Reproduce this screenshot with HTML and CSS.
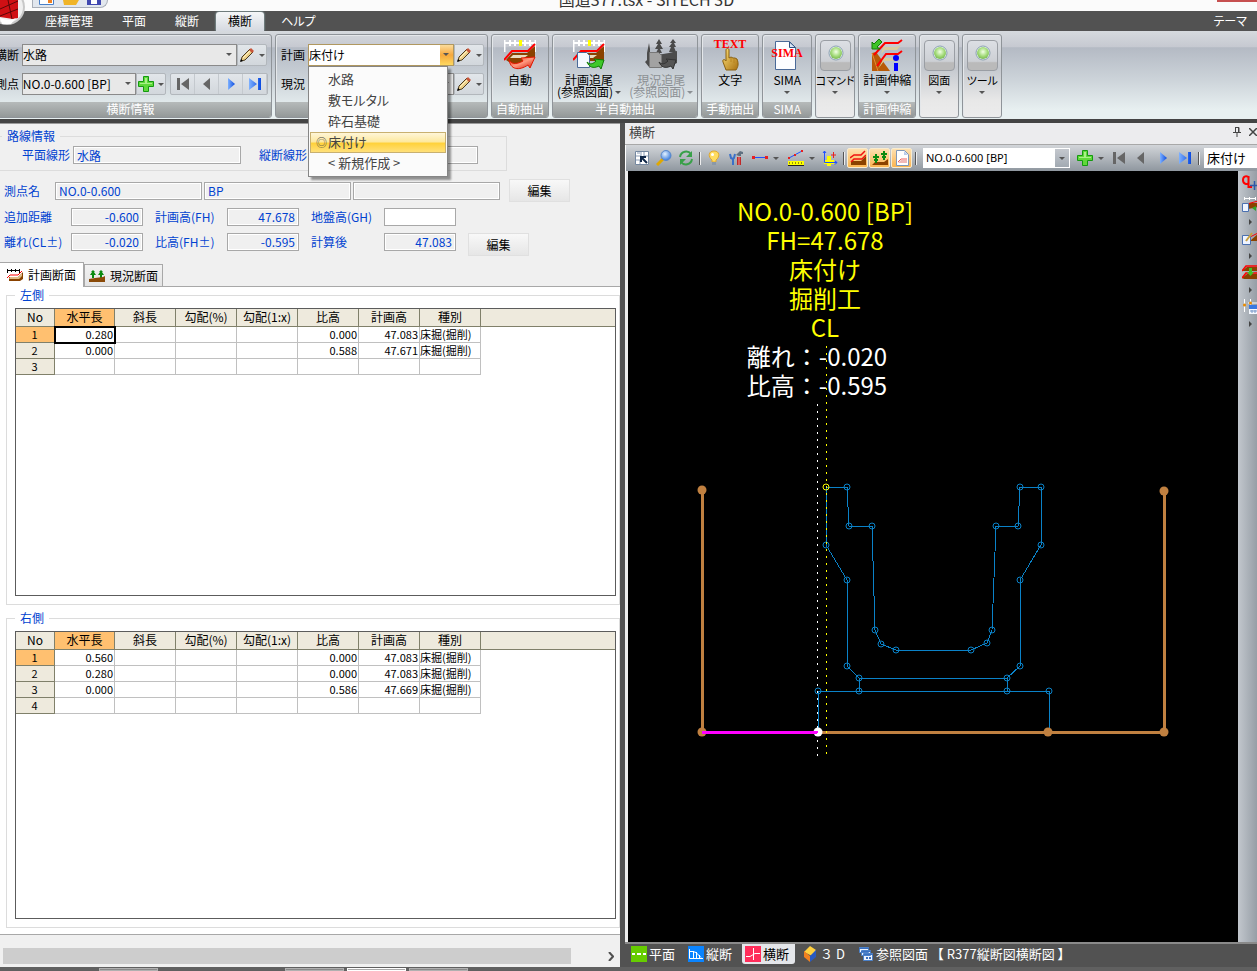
FILE: index.html
```
<!DOCTYPE html>
<html lang="ja">
<head>
    <meta charset="UTF-8">
    <meta name="viewport" content="width=device-width, initial-scale=1.0">
    <title>国道377.tsx - SiTECH 3D</title>
    <link rel="stylesheet" href="styles.css">
</head>
<body>
    <!-- Icons -->
    <svg class="sprite" width="0" height="0" aria-hidden="true">
        <defs>
            <linearGradient id="g-red" x1="0" y1="0" x2="1" y2="1"><stop offset="0" stop-color="#ff2a10"/><stop offset=".5" stop-color="#ff9a80"/><stop offset="1" stop-color="#d01000"/></linearGradient>
            <linearGradient id="g-blue" x1="0" y1="0" x2="1" y2="0"><stop offset="0" stop-color="#7fb2ff"/><stop offset="1" stop-color="#0a4ae0"/></linearGradient>
            <linearGradient id="g-gold" x1="0" y1="0" x2="1" y2="1"><stop offset="0" stop-color="#ffe27a"/><stop offset="1" stop-color="#a87010"/></linearGradient>
            <radialGradient id="g-ball" cx=".5" cy=".4" r=".6"><stop offset="0" stop-color="#f2ffe6"/><stop offset=".6" stop-color="#a5dc7c"/><stop offset="1" stop-color="#79b850"/></radialGradient>
            <radialGradient id="g-lens" cx=".4" cy=".35" r=".7"><stop offset="0" stop-color="#e4f2ff"/><stop offset="1" stop-color="#2f74d8"/></radialGradient>
        </defs>
        <symbol id="i-pencil" viewBox="0 0 16 16">
            <path d="M2 14l1-4 8-8 3 3-8 8z" fill="#ecd08a" stroke="#4a3a20"/>
            <path d="M10 3l3 3 2-2-3-3z" fill="#c8553a"/><path d="M4 11l7-7" stroke="#fff3c8"/><path d="M1 15l1-3 2 2z"/>
        </symbol>
        <symbol id="i-plus" viewBox="0 0 16 16">
            <path d="M5.500.5h5v5h5v5h-5v5h-5v-5h-5v-5h5z" fill="#5fd83a" stroke="#149a10"/><path d="M7 2h2v5h5v1H2V7h5z" fill="#a8f088"/>
        </symbol>
        <symbol id="i-first" viewBox="0 0 12 12"><path d="M0 0h3v12H0zM12 0v12L4 6z" fill="#666"/></symbol>
        <symbol id="i-prev" viewBox="0 0 12 12"><path d="M9 0v12L2 6z" fill="#666"/></symbol>
        <symbol id="i-next" viewBox="0 0 12 12"><path d="M3 0v12l7-6z" fill="url(#g-blue)"/></symbol>
        <symbol id="i-last" viewBox="0 0 12 12"><path d="M0 0v12l8-6zM9 0h3v12H9z" fill="url(#g-blue)"/></symbol>
        <symbol id="i-auto" viewBox="0 0 32 32">
            <path d="M.5 1v12M31.500 1v12M0 4h32M6 1v6M11 1v6M21 1v6M26 1v6" stroke="#fff" stroke-width="2" fill="none"/><path d="M15 1h3v6h-3z" fill="#ff0"/>
            <path d="M8 14h15l8-7v12l-10 6H8l-6-4z" fill="#8a4200"/><path d="M9 16h15l-4 3H6z" fill="#e8dcc0"/>
            <path d="M0 21l8-9h16l7-7" stroke="#f00" stroke-width="2" fill="none"/>
            <path d="M5 20c1 5 7 6 14 2l-2-3 14-1-5 11-2-3c-9 6-18 5-19-6z" fill="url(#g-red)" stroke="#e01800"/>
        </symbol>
        <symbol id="i-trace" viewBox="0 0 32 32">
            <path d="M.5 1v12M31.500 1v12M0 4h32M6 1v6M11 1v6M21 1v6M26 1v6" stroke="#fff" stroke-width="2" fill="none"/><path d="M15 1h3v6h-3z" fill="#ff0"/>
            <path d="M8 14h15l8-7v15H8z" fill="#8a4200"/><path d="M9 16h15l-4 3H6z" fill="#e8dcc0"/>
            <path d="M0 21l8-9h16l7-7" stroke="#f00" stroke-width="2" fill="none"/>
            <path d="M4.500 13.500h9l3 3v12h-12z" fill="#f4f8ff" stroke="#4a6a98"/>
            <path d="M14 23c3 3 6 2 9-1l-2-2 10 1-3 9-2-3c-6 3-10 1-12-4z" fill="#3fc82a" stroke="#127a08"/>
        </symbol>
        <symbol id="i-trees" viewBox="0 0 32 32">
            <path d="M14 0l3 5h-2l3 5h-3l2 4h-6l2-4h-3l3-5h-2zM28 0l3 4h-2l2 4h-2l2 5h-7l2-5h-2l3-4h-2zM4 4l1 6v4H2z" fill="#4a4a4a"/>
            <path d="M2 14h5l5 2 12-2 8-2v12l-9 4H4l-4-5 2-2z" fill="#4c4c4c"/><path d="M4.500 13.500h9l3 3v12h-12z" fill="#a2a2a2" stroke="#777"/>
            <path d="M14 23c3 3 6 2 9-1l-2-2 10 1-3 9-2-3c-6 3-10 1-12-4z" fill="#555" stroke="#333"/>
        </symbol>
        <symbol id="i-ball" viewBox="0 0 16 16"><circle cx="8" cy="8" r="7" fill="#eef4f8" stroke="#8aa0b0"/><circle cx="8" cy="8" r="6" fill="url(#g-ball)"/></symbol>
        <symbol id="i-stretch" viewBox="0 0 32 32">
            <path d="M1 32V14l4-1 14 19z" fill="#b85a08"/><path d="M1 14l6 18" stroke="#e88a30"/>
            <path d="M12 8h13l5-2-4 5H14l-4 4zM13 19h14l-3 3H13l-6 8z" fill="#d8cca0"/>
            <path d="M3 16L14 4h13l4-3M6 27l9-12h12l4-3" stroke="#f00" stroke-width="2" fill="none"/>
            <path d="M1 10V3l2 2 5-5 3 3-5 5 3 2z" fill="#3ec428" stroke="#127a08"/>
            <circle cx="25" cy="19" r="3" fill="#00f"/><path d="M23 24h4v8h-4z" fill="#00f"/>
        </symbol>
        <symbol id="i-section" viewBox="0 0 16 12">
            <path d="M0 1.500h13M.5 0v4M4.500 0v3M8.500 0v3M12.500 0v4" stroke="#000" fill="none"/>
            <path d="M2 8h9l5-5v7l-3 2H2z" fill="#8a4200"/><path d="M3 8h8l4-4v3l-3 3H2z" fill="#e0bc88"/><path d="M0 9l3-3h8l4-4" stroke="#f00" fill="none"/>
        </symbol>
        <symbol id="i-trees-small" viewBox="0 0 16 12">
            <path d="M4 0l2 2H5l2 3H5v3H3V5H1l2-3H2zM12 0l2 2h-1l2 3h-2v3h-2V5H9l2-3h-1z" fill="#0a8a10"/><path d="M0 9l6-1 8-1 2-1v6H0z" fill="#8a4a08"/>
        </symbol>
        <symbol id="i-window" viewBox="0 0 16 16">
            <path d="M1.500 1.500h13v13h-13z" fill="#fff" stroke="#7488a0"/><path d="M2 6h5V2M3 3h3M10 2v4h4M2 10h4v4" stroke="#8a9cb4" fill="none"/><path d="M7 7l6 6M7 12V7h5" stroke="#102848" stroke-width="2" fill="none"/>
        </symbol>
        <symbol id="i-loupe" viewBox="0 0 16 16"><path d="M1 15l6-6" stroke="#e0a800" stroke-width="3"/><circle cx="10" cy="5.500" r="5" fill="url(#g-lens)" stroke="#5a88c8"/></symbol>
        <symbol id="i-refresh" viewBox="0 0 16 16"><path d="M2 7c1-6 8-7 11-3M14 9c-1 6-8 7-11 3" stroke="#38a048" stroke-width="2" fill="none"/><path d="M14 1v6H8zM2 15V9h6z" fill="#38a048"/></symbol>
        <symbol id="i-bulb" viewBox="0 0 16 16"><path d="M8 1c6 0 6 6 2 9v2H6v-2C2 7 2 1 8 1z" fill="#ffdc60" stroke="#e0a830"/><circle cx="6.500" cy="4.500" r="1.500" fill="#fff"/><path d="M6 12h4v3H6z" fill="#8a98a8"/></symbol>
        <symbol id="i-tools" viewBox="0 0 16 16"><path d="M2 4l1 4 2 1v6M7 4L6 8 5 9" stroke="#3a70c8" stroke-width="2" fill="none"/><path d="M8 5l4-4 3 1v2h-2v2h-2z" fill="#607080"/><path d="M9 7h4v8H9z" fill="#c02828"/><path d="M11 7v8" stroke="#f09090"/></symbol>
        <symbol id="i-line" viewBox="0 0 16 16"><path d="M1 7.500h14" stroke="#2050ff"/><path d="M0 6h3v3H0zM13 6h3v3h-3z" fill="#e82020"/></symbol>
        <symbol id="i-measure" viewBox="0 0 16 16"><path d="M1 8l13-7" stroke="#2050ff"/><path d="M0 7h2v2H0zM6 4h2v2H6zM13 0h2v2h-2z" fill="#e82020"/><path d="M0 11h16v4H0z" fill="#ff0"/><path d="M0 15.500h16M1 13h1M4 13h1M7 13h1M10 13h1M13 13h1" stroke="#222"/></symbol>
        <symbol id="i-axes" viewBox="0 0 16 16"><path d="M5 6h4v4h3v4H9v2H5v-2H2v-4h3z" fill="#ff0"/><path d="M2.500 1v11.500H15M1 3l1.500-2L4 3M13 11l2 1.500-2 2" stroke="#2050ff" fill="none"/><path d="M11.500 2v6M9 5h5" stroke="#e82020"/></symbol>
        <symbol id="i-t-plan" viewBox="0 0 16 16"><path d="M1 15v-4h10l5-5v9z" fill="#8a4200"/><path d="M0 8l4-3h7l4-4M1 12l3-3h8l4-4" stroke="#f01010" stroke-width="1.500" fill="none"/></symbol>
        <symbol id="i-t-trees" viewBox="0 0 16 16"><path d="M0 15l3-3h9l4-3v6z" fill="#8a4200"/><path d="M4 4v9M1 7h6M2 10h4M12 1v9M9 4h6M10 7h4" stroke="#0a8a10" stroke-width="2"/></symbol>
        <symbol id="i-t-page" viewBox="0 0 16 16"><path d="M2.500.5h8l4 4v11h-12z" fill="#fff" stroke="#8098b8"/><path d="M10 1v4h4z" fill="#b8ccec"/><path d="M4 13l3-3h6v3z" fill="#f0b8b8"/><path d="M4 12l3-3h6" stroke="#f06060" fill="none"/></symbol>
        <symbol id="i-s-doc" viewBox="0 0 16 16"><path d="M2 1.500h12M2.500 0v3M7.500 0v3M13.500 0v3" stroke="#fff"/><path d="M6 12V6h10v4z" fill="#8a4200"/><path d="M5 7l11-3" stroke="#f00"/><path d="M.5 6.500h6v8h-6z" fill="#eef4ff" stroke="#4a70b0"/><path d="M6 8l8 6v-5l-4 2z" fill="#2fa828"/></symbol>
        <symbol id="i-s-edit" viewBox="0 0 16 16"><path d="M9 9l7-6v7H9z" fill="#8a4200"/><path d="M6 7l10-5" stroke="#f00"/><path d="M.5 4.500h8v9h-8z" fill="#eef4ff" stroke="#4a70b0"/><path d="M4 10l6-8" stroke="#c8a040" stroke-width="2"/></symbol>
        <symbol id="i-s-layer" viewBox="0 0 16 16"><path d="M0 6l5-4h11v4H4zM0 13l5-4h11v5H2z" fill="#8a4200"/><path d="M0 6l4-5h12M0 13l4-5h12" stroke="#f00" stroke-width="1.500" fill="none"/><path d="M7 3h3v4h2l-3.500 4L5 7h2z" fill="#3ec428"/></symbol>
        <symbol id="i-s-table" viewBox="0 0 16 16"><path d="M2.500 0v13M8.500 0v6M6 4h10" stroke="#fff"/><circle cx="2.500" cy="6" r="1.500" fill="#e88a00"/><circle cx="8.500" cy="4" r="1.500" fill="#e88a00"/><path d="M7 6h9v9H7z" fill="#f4f8ff"/><path d="M7 6h9v4H7z" fill="#3a78e0"/><path d="M8 12h8M10 11v3M13 11v3" stroke="#7898c8"/></symbol>
        <symbol id="i-v-plan" viewBox="0 0 16 16"><path d="M0 0h16v16H0z" fill="#6c0"/><path d="M1 8h3M6 8h4M12 8h3" stroke="#fff" stroke-width="2"/></symbol>
        <symbol id="i-v-long" viewBox="0 0 16 16"><path d="M0 0h16v16H0z" fill="#0a84ff"/><path d="M1.500 3v9.500H15M1 5.500h4l3 1 5 5M5.500 5v8M8.500 6v7M11.500 9v4" stroke="#fff" fill="none"/></symbol>
        <symbol id="i-v-cross" viewBox="0 0 16 16"><path d="M0 0h16v16H0z" fill="#ff2d5a"/><path d="M8.500 2v12M1 10.500h4l5-3h5" stroke="#fff" fill="none"/></symbol>
        <symbol id="i-v-3d" viewBox="0 0 16 16"><path d="M8 0l6 4-4 6-8-4z" fill="#ffd040"/><path d="M2 5l6 5v6l-6-5z" fill="#f08020"/><path d="M8 10l6-6v7l-6 5z" fill="#2a5ac0"/></symbol>
        <symbol id="i-v-ref" viewBox="0 0 16 16"><path d="M1.500 1.500h9v5h-9zM3.500 4.500h9v5h-9zM5.500 7.500h9v7h-9z" fill="#eaf2ff" stroke="#4a80c8"/><path d="M1 2.500h10M3 5.500h10M6 8.500h9" stroke="#3a70c0"/><path d="M8 12h2M11 12h2" stroke="#3a70c0" stroke-width="2"/></symbol>
        <symbol id="i-pin" viewBox="0 0 8 10"><path d="M2 .5h4v5M2.500 0v5M5.500 0v5M0 5.500h8M4 6v4" stroke="#444" fill="none"/></symbol>
        <symbol id="i-close" viewBox="0 0 8 8"><path d="M0 0l8 8M8 0L0 8" stroke="#444" stroke-width="1.500"/></symbol>
    </svg>

    <div class="app">
        <svg class="app-logo" viewBox="0 0 26 26" aria-hidden="true">
            <circle cx="7" cy="7" r="18" fill="#c8c8c8"/><circle cx="7" cy="7" r="16" fill="#f0f0f0"/>
            <path d="M0 0h18v18L13 19 0 17z" fill="#d01014"/><path d="M0 9L18 1M0 16l18-7M8 0l4 19" stroke="#5a0808"/><path d="M0 18q10 4 16 0l-5 6H2z" fill="#fff"/>
        </svg>

        <header class="titlebar">
            <div class="quick">
                <svg width="16" height="5" viewBox="0 0 16 5"><path d="M.5 0v4.500h14V0" fill="#fff" stroke="#4a80c8"/><path d="M9 0h4v3H9z" fill="#f08020"/></svg>
                <svg width="16" height="5" viewBox="0 0 16 5"><path d="M0 0h16l-3 5H1z" fill="#f0b428"/></svg>
                <svg width="14" height="5" viewBox="0 0 14 5"><path d="M0 0h14v5H0z" fill="#4048b0"/><path d="M4 0h6v4H4z" fill="#fff"/></svg>
            </div>
            <div class="title">国道377.tsx - SiTECH 3D</div>
            <div class="window-buttons"><span class="close"></span></div>
        </header>

        <nav class="menubar">
            <a href="#">座標管理</a>
            <a href="#">平面</a>
            <a href="#">縦断</a>
            <a href="#" class="active">横断</a>
            <a href="#">ヘルプ</a>
            <a href="#" class="theme">テーマ</a>
        </nav>

        <div class="ribbon">
            <section class="group group-info">
                <div class="rows">
                    <div class="row">
                        <label for="line">横断</label>
                        <span class="combo combo-long"><select id="line"><option>水路</option></select></span>
                        <button class="split" aria-label="編集"><svg width="16" height="16"><use href="#i-pencil"/></svg><i class="caret"></i></button>
                    </div>
                    <div class="row">
                        <label for="station">測点</label>
                        <span class="combo combo-short"><select id="station"><option>NO.0-0.600 [BP]</option></select></span>
                        <button class="split" aria-label="追加"><svg width="16" height="16"><use href="#i-plus"/></svg><i class="caret"></i></button>
                        <div class="pager">
                            <button aria-label="最初"><svg width="12" height="12"><use href="#i-first"/></svg></button>
                            <button aria-label="前"><svg width="12" height="12"><use href="#i-prev"/></svg></button>
                            <button aria-label="次"><svg width="12" height="12"><use href="#i-next"/></svg></button>
                            <button aria-label="最後"><svg width="12" height="12"><use href="#i-last"/></svg></button>
                        </div>
                    </div>
                </div>
                <h2>横断情報</h2>
            </section>

            <section class="group group-plan">
                <div class="rows">
                    <div class="row">
                        <label for="plan">計画</label>
                        <span class="combo combo-mid open">
                            <select id="plan"><option>床付け</option></select>
                            <ul class="dropdown">
                                <li>水路</li>
                                <li>敷モルタル</li>
                                <li>砕石基礎</li>
                                <li class="selected">床付け</li>
                                <li>&lt; 新規作成 &gt;</li>
                            </ul>
                        </span>
                        <button class="split" aria-label="計画を編集"><svg width="16" height="16"><use href="#i-pencil"/></svg><i class="caret"></i></button>
                    </div>
                    <div class="row">
                        <label for="present">現況</label>
                        <span class="combo combo-mid"><select id="present"><option></option></select></span>
                        <button class="split" aria-label="現況を編集"><svg width="16" height="16"><use href="#i-pencil"/></svg><i class="caret"></i></button>
                    </div>
                </div>
                <h2></h2>
            </section>

            <section class="group">
                <div class="tools"><button class="big"><svg width="32" height="32"><use href="#i-auto"/></svg>自動</button></div>
                <h2>自動抽出</h2>
            </section>

            <section class="group group-semi">
                <div class="tools">
                    <button class="big"><svg width="32" height="32"><use href="#i-trace"/></svg>計画追尾<span>(参照図面)<i class="caret"></i></span></button>
                    <button class="big" disabled><svg width="32" height="32"><use href="#i-trees"/></svg>現況追尾<span>(参照図面)<i class="caret"></i></span></button>
                </div>
                <h2>半自動抽出</h2>
            </section>

            <section class="group">
                <div class="tools">
                    <button class="big">
                        <svg width="34" height="32" viewBox="0 0 34 32">
                            <text x="17" y="9" text-anchor="middle" class="icon-serif">TEXT</text>
                            <path d="M13 11c0-2 3-2 3 0v8l2-1 2 1 2 0 2 1c2 5 1 8-1 11H13l-3-8c-1-3 2-3 3-1z" fill="url(#g-gold)" stroke="#8a6010"/>
                            <path d="M18 19v4M21 20v4" stroke="#b88420"/>
                        </svg>
                        文字
                    </button>
                </div>
                <h2>手動抽出</h2>
            </section>

            <section class="group group-sima">
                <div class="tools">
                    <button class="big">
                        <svg width="34" height="32" viewBox="0 0 34 32">
                            <path d="M5.500 2.500h14l6 6v22h-20z" fill="#fcfdff" stroke="#4a6a98"/><path d="M19.500 3v5.500h6z" fill="#dde8f8" stroke="#2f5080"/>
                            <text x="17" y="18" text-anchor="middle" class="icon-serif">SIMA</text>
                        </svg>
                        SIMA<span><i class="caret"></i></span>
                    </button>
                </div>
                <h2>SIMA</h2>
            </section>

            <section class="group folded">
                <button class="big"><span class="ball"><svg width="16" height="16"><use href="#i-ball"/></svg></span>コマンド<span><i class="caret"></i></span></button>
            </section>

            <section class="group">
                <div class="tools"><button class="big"><svg width="32" height="32"><use href="#i-stretch"/></svg>計画伸縮<span><i class="caret"></i></span></button></div>
                <h2>計画伸縮</h2>
            </section>

            <section class="group folded">
                <button class="big"><span class="ball"><svg width="16" height="16"><use href="#i-ball"/></svg></span>図面<span><i class="caret"></i></span></button>
            </section>

            <section class="group folded">
                <button class="big"><span class="ball"><svg width="16" height="16"><use href="#i-ball"/></svg></span>ツール<span><i class="caret"></i></span></button>
            </section>
        </div>

        <main class="work">
            <section class="left">
                <fieldset class="route">
                    <legend>路線情報</legend>
                    <div class="route-row">
                        <label for="h-line">平面線形</label><input id="h-line" value="水路" readonly>
                        <label for="v-line">縦断線形</label><input id="v-line" value="" readonly>
                    </div>
                </fieldset>

                <div class="station-row">
                    <label for="st-name">測点名</label>
                    <input id="st-name" value="NO.0-0.600" readonly>
                    <input aria-label="測点名 2" value="BP" readonly>
                    <input aria-label="測点名 3" value="" readonly>
                    <button class="edit">編集</button>
                </div>

                <div class="values">
                    <label for="v1">追加距離</label><input id="v1" value="-0.600" readonly>
                    <label for="v2">計画高(FH)</label><input id="v2" value="47.678" readonly>
                    <label for="v3">地盤高(GH)</label><input id="v3" value="">
                    <span></span>
                    <label for="v4">離れ(CL±)</label><input id="v4" value="-0.020" readonly>
                    <label for="v5">比高(FH±)</label><input id="v5" value="-0.595" readonly>
                    <label for="v6">計算後</label><input id="v6" value="47.083" readonly>
                    <button class="edit">編集</button>
                </div>

                <div class="tabs">
                    <button class="active"><svg width="16" height="12"><use href="#i-section"/></svg>計画断面</button>
                    <button><svg width="16" height="12"><use href="#i-trees-small"/></svg>現況断面</button>
                </div>

                <div class="tab-page">
                    <fieldset class="side">
                        <legend>左側</legend>
                        <div class="sheet">
                            <table>
                                <colgroup><col class="c-no"><col class="c-first"><col class="c" span="6"><col></colgroup>
                                <thead>
                                    <tr><th>No</th><th class="on">水平長</th><th>斜長</th><th>勾配(%)</th><th>勾配(1:x)</th><th>比高</th><th>計画高</th><th>種別</th><th></th></tr>
                                </thead>
                                <tbody>
                                    <tr><th class="on">1</th><td class="cursor">0.280</td><td></td><td></td><td></td><td>0.000</td><td>47.083</td><td class="kind">床掘(掘削)</td></tr>
                                    <tr><th>2</th><td>0.000</td><td></td><td></td><td></td><td>0.588</td><td>47.671</td><td class="kind">床掘(掘削)</td></tr>
                                    <tr><th>3</th><td></td><td></td><td></td><td></td><td></td><td></td><td></td></tr>
                                </tbody>
                            </table>
                        </div>
                    </fieldset>

                    <fieldset class="side">
                        <legend>右側</legend>
                        <div class="sheet">
                            <table>
                                <colgroup><col class="c-no"><col class="c-first"><col class="c" span="6"><col></colgroup>
                                <thead>
                                    <tr><th>No</th><th class="on">水平長</th><th>斜長</th><th>勾配(%)</th><th>勾配(1:x)</th><th>比高</th><th>計画高</th><th>種別</th><th></th></tr>
                                </thead>
                                <tbody>
                                    <tr><th class="on">1</th><td>0.560</td><td></td><td></td><td></td><td>0.000</td><td>47.083</td><td class="kind">床掘(掘削)</td></tr>
                                    <tr><th>2</th><td>0.280</td><td></td><td></td><td></td><td>0.000</td><td>47.083</td><td class="kind">床掘(掘削)</td></tr>
                                    <tr><th>3</th><td>0.000</td><td></td><td></td><td></td><td>0.586</td><td>47.669</td><td class="kind">床掘(掘削)</td></tr>
                                    <tr><th>4</th><td></td><td></td><td></td><td></td><td></td><td></td><td></td></tr>
                                </tbody>
                            </table>
                        </div>
                    </fieldset>
                </div>

                <div class="scrollbar">
                    <div class="thumb"></div>
                    <svg width="6" height="9" viewBox="0 0 6 9"><path d="M1 0l4 4.500L1 9" stroke="#505050" stroke-width="2" fill="none"/></svg>
                </div>
            </section>

            <section class="right">
                <div class="pane-title">
                    <span>横断</span>
                    <svg width="8" height="10"><use href="#i-pin"/></svg>
                    <svg width="8" height="8"><use href="#i-close"/></svg>
                </div>

                <div class="toolbar">
                    <button aria-label="範囲"><svg width="16" height="16"><use href="#i-window"/></svg></button>
                    <button aria-label="拡大"><svg width="16" height="16"><use href="#i-loupe"/></svg></button>
                    <button aria-label="再描画"><svg width="16" height="16"><use href="#i-refresh"/></svg></button>
                    <i class="sep"></i>
                    <button aria-label="表示"><svg width="16" height="16"><use href="#i-bulb"/></svg></button>
                    <button aria-label="設定"><svg width="16" height="16"><use href="#i-tools"/></svg></button>
                    <button class="wide" aria-label="線"><svg width="16" height="16"><use href="#i-line"/></svg><i class="caret"></i></button>
                    <button class="wide" aria-label="計測"><svg width="16" height="16"><use href="#i-measure"/></svg><i class="caret"></i></button>
                    <button aria-label="座標軸"><svg width="16" height="16"><use href="#i-axes"/></svg></button>
                    <i class="sep"></i>
                    <button class="toggle" aria-label="計画"><svg width="16" height="16"><use href="#i-t-plan"/></svg></button>
                    <button class="toggle" aria-label="現況"><svg width="16" height="16"><use href="#i-t-trees"/></svg></button>
                    <button class="toggle" aria-label="図面"><svg width="16" height="16"><use href="#i-t-page"/></svg></button>
                    <i class="sep"></i>
                    <span class="combo flat"><select aria-label="測点"><option>NO.0-0.600 [BP]</option></select></span>
                    <button class="wide" aria-label="追加"><svg width="16" height="16"><use href="#i-plus"/></svg><i class="caret"></i></button>
                    <button aria-label="最初"><svg width="12" height="12"><use href="#i-first"/></svg></button>
                    <button aria-label="前"><svg width="12" height="12"><use href="#i-prev"/></svg></button>
                    <button aria-label="次"><svg width="12" height="12"><use href="#i-next"/></svg></button>
                    <button aria-label="最後"><svg width="12" height="12"><use href="#i-last"/></svg></button>
                    <i class="sep"></i>
                    <span class="combo flat surface"><select aria-label="計画"><option>床付け</option></select></span>
                </div>

                <div class="view">
                    <svg class="drawing" viewBox="0 0 610 771" role="img" aria-label="横断図">
                        <defs>
                            <marker id="node" markerWidth="9" markerHeight="9" refX="4.500" refY="4.500" markerUnits="userSpaceOnUse">
                                <circle cx="4.500" cy="4.500" r="3" fill="none" stroke="#0a82c8"/>
                            </marker>
                            <marker id="dot" markerWidth="10" markerHeight="10" refX="5" refY="5" markerUnits="userSpaceOnUse">
                                <circle cx="5" cy="5" r="4.500" fill="#c08040"/>
                            </marker>
                        </defs>
                        <g class="caption">
                            <text x="197" y="50">NO.0-0.600 [BP]</text>
                            <text x="197" y="79">FH=47.678</text>
                            <text x="197" y="108">床付け</text>
                            <text x="197" y="137">掘削工</text>
                            <text x="197" y="166">CL</text>
                            <text x="189" y="195" class="white">離れ：-0.020</text>
                            <text x="189" y="224" class="white">比高：-0.595</text>
                        </g>
                        <!-- U字溝 -->
                        <polyline class="pipe" points="198,316 219,316 221,355 244,355 247,459 253,473 268,479 343,479 359,472 364,459 368,355 390,355 392,316 413,316 413,374 392,409 392,495 379,507 231,507 219,495 219,409 198,374 198,316"/>
                        <!-- 敷モルタル -->
                        <polyline class="pipe" points="231,507 231,520 379,520 379,507"/>
                        <!-- 砕石基礎 -->
                        <polyline class="pipe" points="190,561 190,520 421,520 421,561"/>
                        <!-- 床付け -->
                        <polyline class="cut" points="74,319 74,561 420,561 536,561 536,320"/>
                        <circle cx="190" cy="561" r="4.500" fill="#fff"/>
                        <path d="M74 561h116" stroke="#f0f" stroke-width="3" shape-rendering="crispEdges"/>
                        <path d="M189.500 233v352" stroke="#fff" class="axis"/>
                        <path d="M198.500 175v408" stroke="#ff0" class="axis"/>
                        <circle cx="198" cy="316" r="3" fill="none" stroke="#ff0"/>
                    </svg>
                    <div class="side-tools">
                        <button aria-label="CL移動">
                            <svg width="16" height="16" viewBox="0 0 16 16"><path d="M7 3C5 0 1 1 1 5s4 5 6 3M6.500 1v11H10" stroke="#f00" stroke-width="2" fill="none"/><path d="M12.500 6v9M8 10.500h8" stroke="#2f58a8" stroke-width="1.500"/></svg>
                        </button>
                        <button aria-label="抽出"><svg width="16" height="16"><use href="#i-s-doc"/></svg><i class="caret side-caret"></i></button>
                        <button aria-label="編集"><svg width="16" height="16"><use href="#i-s-edit"/></svg><i class="caret side-caret"></i></button>
                        <button aria-label="層"><svg width="16" height="16"><use href="#i-s-layer"/></svg><i class="caret side-caret"></i></button>
                        <button aria-label="表"><svg width="16" height="16"><use href="#i-s-table"/></svg><i class="caret side-caret"></i></button>
                    </div>
                </div>

                <nav class="view-tabs">
                    <a href="#"><svg width="16" height="16"><use href="#i-v-plan"/></svg>平面</a>
                    <a href="#"><svg width="16" height="16"><use href="#i-v-long"/></svg>縦断</a>
                    <a href="#" class="active"><svg width="16" height="16"><use href="#i-v-cross"/></svg>横断</a>
                    <a href="#"><svg width="16" height="16"><use href="#i-v-3d"/></svg>３ D</a>
                    <a href="#"><svg width="16" height="16"><use href="#i-v-ref"/></svg>参照図面 【 R377縦断図横断図 】</a>
                </nav>
            </section>
        </main>

        <footer class="taskbar">
            <span class="first"></span><span></span><span class="current"></span><span></span>
        </footer>
    </div>
</body>
</html>
```
FILE: styles.css
```
* {
    box-sizing: border-box;
}
body {
    margin: 0;
    font-family: "Noto Sans CJK JP", sans-serif;
    font-size: 12px;
    line-height: 14px;
    font-feature-settings: "palt";
    color: #000;
    background: #f0f0f0;
}
a {
    color: inherit;
    text-decoration: none;
}
button, input, select {
    font: inherit;
    font-feature-settings: inherit;
    margin: 0;
    padding: 0;
    border: 0;
    border-radius: 0;
    background: none;
    color: inherit;
}
svg {
    display: block;
    flex: none;
}
.sprite {
    position: absolute;
}
.app {
    position: relative;
    display: flex;
    flex-direction: column;
    height: 100vh;
    overflow: hidden;
}
.app-logo {
    position: absolute;
    top: 0;
    left: 0;
    width: 26px;
    height: 26px;
}
.icon-serif {
    font-family: "Liberation Serif", serif;
    font-size: 12px;
    font-weight: bold;
    fill: #f00;
}
.caret {
    flex: none;
    display: inline-block;
    border: 3px solid transparent;
    border-top-color: #555;
    border-bottom: 0;
}

/* Title bar */
.titlebar {
    display: flex;
    align-items: flex-end;
    height: 11px;
    overflow: hidden;
    background: #fbfbfb;
}
.quick {
    flex: 0 0 76px;
    display: flex;
    gap: 8px;
    height: 8px;
    margin: 0 0 3px 32px;
    padding-left: 6px;
    background: #e2e7ee;
    border: 1px solid #a8aeb8;
    border-top: 0;
    border-radius: 0 0 8px 0;
}
.title {
    flex: 1;
    padding-bottom: 2px;
    font-size: 16px;
    line-height: 20px;
    text-align: center;
    color: #333;
}
.window-buttons {
    display: flex;
    justify-content: flex-end;
    width: 72px;
    height: 11px;
}
.close {
    width: 40px;
    height: 2px;
    background: #c75050;
}

/* Menu */
.menubar {
    display: flex;
    gap: 5px;
    height: 20px;
    padding-left: 33px;
    color: #fff;
    background: #525252;
}
.menubar a {
    padding: 3px 12px;
}
.menubar .active {
    margin-top: 1px;
    padding-top: 2px;
    color: #000;
    background: linear-gradient(#f4f6f8, #d5d9e0);
    border-radius: 3px 3px 0 0;
    box-shadow: 0 0 2px #bdf0f4;
}
.menubar .theme {
    margin-left: auto;
    padding-right: 10px;
}

/* Ribbon */
.ribbon {
    display: flex;
    gap: 3px;
    height: 88px;
    padding: 3px 0 1px;
    background: linear-gradient(#d6dade, #c6c9d1 18%, #b4bac4 19%, #ccd3d9 55%, #e8f0f1 90%);
}
.group {
    flex: none;
    display: flex;
    flex-direction: column;
    border: 1px solid #8f9499;
    border-radius: 3px;
    box-shadow: inset 1px 1px 0 #e4e7ea;
    overflow: hidden;
}
.group h2 {
    height: 15px;
    margin: auto 0 0;
    padding: 0 4px;
    font-size: 12px;
    font-weight: normal;
    line-height: 14px;
    text-align: center;
    color: #fff;
    background: linear-gradient(#b6baba, #949999);
}
.group-info {
    margin-left: -15px;
    padding-left: 4px;
    width: 287px;
}
.group-plan {
    width: 213px;
    overflow: visible;
}
.rows {
    display: flex;
    flex-direction: column;
    gap: 7px;
    padding: 9px 3px 0 5px;
}
.row {
    display: flex;
    align-items: center;
    height: 22px;
}
.row label {
    width: 27px;
}
.combo {
    position: relative;
    display: flex;
    align-items: center;
    height: 22px;
    background: #e8e8e8;
    border: 1px solid #8a8a8a;
}
.combo select {
    width: 100%;
    height: 100%;
    appearance: none;
}
.combo::after {
    content: "";
    position: absolute;
    right: 4px;
    top: 8px;
    border: 3px solid transparent;
    border-top-color: #555;
    border-bottom: 0;
    pointer-events: none;
}
.combo-long {
    width: 215px;
}
.combo-short {
    width: 115px;
}
.combo-mid {
    width: 146px;
}
.combo.open {
    background: linear-gradient(#fbdc9c, #f6a83c 50%, #fdd860);
    border-color: #b09860;
}
.combo.open select {
    width: 131px;
    background: #fff;
}
.split {
    display: flex;
    align-items: center;
    justify-content: center;
    gap: 4px;
    width: 30px;
    height: 22px;
    background: linear-gradient(#e2e6ea, #d2d7dc);
    border: 1px solid #b2b7bc;
    border-radius: 0 2px 2px 0;
}
.pager {
    display: flex;
    height: 22px;
    margin-left: 4px;
    background: linear-gradient(#e2e6ea, #d2d7dc);
    border: 1px solid #b2b7bc;
    border-radius: 2px;
}
.pager button {
    display: flex;
    align-items: center;
    justify-content: center;
    width: 24px;
    border-right: 1px solid #c4c9ce;
}
.dropdown {
    position: absolute;
    z-index: 10;
    top: 21px;
    left: -1px;
    width: 140px;
    margin: 0;
    padding: 2px 1px;
    list-style: none;
    color: #444;
    background: #fbfbfb;
    border: 1px solid #868686;
    box-shadow: 3px 3px 2px rgba(0, 0, 0, .4);
}
.dropdown li {
    height: 21px;
    padding-left: 17px;
    border: 1px solid transparent;
    font-size: 13px;
    line-height: 17px;
}
.dropdown .selected {
    background: linear-gradient(#fff6d8, #fde9a0 45%, #ffd23c 55%, #ffe07a);
    border-color: #c8b070;
}
.dropdown .selected::before {
    content: "◎";
    display: inline-block;
    width: 12px;
    margin-left: -12px;
    font-size: 11px;
}
.tools {
    display: flex;
    justify-content: center;
}
.big {
    display: flex;
    flex-direction: column;
    align-items: center;
    padding: 4px 2px 0;
    line-height: 12px;
    white-space: nowrap;
}
.big > svg {
    margin-bottom: 3px;
}
.big > span {
    display: flex;
    align-items: center;
    gap: 2px;
    height: 12px;
}
.big:disabled {
    color: #8c9094;
}
.big:disabled .caret {
    border-top-color: #8c9094;
}
.group-semi .big {
    padding: 4px 4px 0;
}
.group-sima {
    width: 50px;
}
.folded {
    width: 40px;
    background: linear-gradient(#dcdfe3, #c4c8ce 40%, #e8e8e8 80%, #ececec);
}
.folded .big {
    padding: 5px 0 0;
    font-size: 11px;
}
.big .ball {
    width: 31px;
    height: 31px;
    margin-bottom: 3px;
    padding: 4px 7px;
    align-items: flex-start;
    background: linear-gradient(#dcdfe4, #cdd0d5 70%, #bababa 75%);
    border: 1px solid #9a9ea4;
    border-radius: 4px;
}

/* Work area */
.work {
    flex: 1;
    min-height: 0;
    display: grid;
    grid-template-columns: minmax(0, 620fr) 5px minmax(0, 632fr);
    border-top: 4px solid #444;
    background: #525252;
}
.left {
    display: flex;
    flex-direction: column;
    min-height: 0;
    color: #0042d0;
    background: #f0f0f0;
    border-top: 1px solid #999;
}
fieldset {
    min-width: 0;
    margin: 0;
    padding: 0;
    border: 1px solid #dcdcdc;
}
legend {
    padding: 0 5px;
}
.left input {
    width: 72px;
    height: 18px;
    padding: 0 3px;
    color: #0042d0;
    background: #fff;
    border: 1px solid #a8a8a8;
}
.left input:read-only {
    background: #f0f0f0;
    box-shadow: inset 0 0 0 1px #fff;
}
.edit {
    width: 61px;
    height: 23px;
    color: #000;
    background: linear-gradient(#f8f8f8, #e6e6e6);
    border: 1px solid #e0e0e0;
}
.route {
    margin: 5px 113px 0 -1px;
}
.route legend {
    margin-left: 2px;
}
.route-row {
    display: flex;
    align-items: center;
    gap: 3px;
    padding: 3px 0 6px 22px;
}
.route-row input {
    width: 168px;
    margin-right: 15px;
}
.station-row {
    display: flex;
    align-items: center;
    gap: 2px;
    margin-top: 8px;
    padding-left: 4px;
}
.station-row label {
    width: 49px;
}
.station-row input {
    width: 147px;
}
.station-row .edit {
    margin-left: 7px;
}
.values {
    display: grid;
    grid-template-columns: 55px 72px 60px 72px 61px 72px 61px;
    grid-auto-rows: 25px;
    column-gap: 12px;
    margin-top: 6px;
    padding-left: 4px;
    line-height: 18px;
    white-space: nowrap;
}
.values input {
    text-align: right;
}
.tabs {
    display: flex;
    align-items: flex-end;
    margin-top: 4px;
    border-bottom: 1px solid #a8a8a8;
}
.tabs button {
    display: flex;
    align-items: center;
    gap: 5px;
    height: 22px;
    padding: 0 4px;
    color: #000;
    background: linear-gradient(#f2f2f2, #e4e4e4);
    border: 1px solid #a8a8a8;
    border-bottom: 0;
}
.tabs .active {
    height: 25px;
    margin-bottom: -1px;
    padding: 0 7px;
    border-left: 0;
    background: #fff;
}
.tab-page {
    flex: 1;
    min-height: 0;
    display: flex;
    flex-direction: column;
    gap: 6px;
    padding: 1px 0 6px 6px;
    background: #fff;
    border-bottom: 1px solid #a8a8a8;
}
.side {
    flex: 1;
    display: flex;
    flex-direction: column;
    padding: 6px 3px 8px 8px;
}
.sheet {
    flex: 1;
    overflow: hidden;
    color: #000;
    background: #fff;
    border: 1px solid #5c5c5c;
}
.sheet table {
    width: 100%;
    table-layout: fixed;
    border-spacing: 0;
    font-size: 11px;
    line-height: 14px;
}
.c-no {
    width: 39px;
}
.c-first {
    width: 60px;
}
.c {
    width: 61px;
}
.sheet th, .sheet td {
    height: 16px;
    padding: 0 1px 1px 0;
    white-space: nowrap;
}
.sheet th {
    font-weight: normal;
    background: #eeeadd;
    border-right: 1px solid #80806a;
    border-bottom: 1px solid #80806a;
}
.sheet thead th {
    height: 18px;
    padding: 0 0 2px;
    font-size: 12px;
}
.sheet thead th:last-child {
    border-right: 0;
}
.sheet td {
    text-align: right;
    border-right: 1px solid #c0c0c0;
    border-bottom: 1px solid #c0c0c0;
}
.sheet .kind {
    text-align: left;
}
.sheet .on {
    background: #ffc070;
}
.sheet .cursor {
    outline: 2px solid #000;
    outline-offset: -1px;
}
.scrollbar {
    display: flex;
    align-items: center;
    height: 32px;
    padding: 13px 6px 3px 3px;
    background: #f0f0f0;
}
.thumb {
    width: 93%;
    height: 16px;
    margin-right: auto;
    background: #cdcdcd;
}

/* Cross section pane */
.right {
    grid-column: 3;
    display: flex;
    flex-direction: column;
    min-height: 0;
}
.pane-title {
    display: flex;
    align-items: center;
    gap: 8px;
    height: 22px;
    padding: 0 0 3px 4px;
    font-size: 13px;
    color: #444;
    background: #ececee;
    border-bottom: 1px solid #a8a8a8;
}
.pane-title span {
    margin-right: auto;
}
.toolbar {
    display: flex;
    align-items: center;
    height: 26px;
    padding-left: 5px;
    background: linear-gradient(#d2d5d9, #8f979f);
    border-left: 1px solid #fff;
    overflow: hidden;
}
.toolbar button {
    flex: none;
    display: flex;
    align-items: center;
    justify-content: center;
    gap: 5px;
    width: 22px;
    height: 20px;
}
.toolbar .wide {
    width: 36px;
}
.toolbar .toggle {
    width: 21px;
    margin-right: 1px;
    background: linear-gradient(#fde0b0, #fbb450);
    border: 1px solid #f8ecd0;
    border-radius: 2px;
}
.sep {
    flex: none;
    width: 2px;
    height: 13px;
    margin: 0 2px;
    background: #555;
    border-right: 1px solid #eee;
}
.flat {
    flex: none;
    width: 147px;
    height: 20px;
    margin: 0 2px 0 4px;
    font-family: "Noto Sans", "Noto Sans CJK JP", sans-serif;
    font-size: 11px;
    background: linear-gradient(#c4c8ce, #a2aab2);
    border-color: #fff;
}
.flat select {
    width: 131px;
    padding-left: 2px;
    background: #fff;
}
.surface {
    margin-left: 2px;
    font-size: 13px;
}
.view {
    flex: 1;
    min-height: 0;
    display: flex;
    border-left: 3px solid #eee;
    background: #000;
}
.drawing {
    flex: 1;
    min-width: 0;
    height: 100%;
}
.caption {
    font-size: 24px;
    font-feature-settings: normal;
    text-anchor: middle;
    fill: #ff0;
}
.caption .white {
    fill: #fff;
}
.pipe {
    fill: none;
    stroke: #0a82c8;
    shape-rendering: crispEdges;
    marker-mid: url(#node);
}
.cut {
    fill: none;
    stroke: #c08040;
    stroke-width: 3px;
    shape-rendering: crispEdges;
    marker-start: url(#dot);
    marker-mid: url(#dot);
    marker-end: url(#dot);
}
.axis {
    stroke-dasharray: 2 5;
}
.side-tools {
    width: 19px;
    padding: 4px 0 0 4px;
    display: flex;
    flex-direction: column;
    gap: 6px;
    overflow: hidden;
    background: linear-gradient(90deg, #c2c7cd, #969ea6);
}
.side-tools button {
    display: flex;
    flex-direction: column;
    align-items: flex-start;
    gap: 6px;
}
.side-caret {
    margin-left: 7px;
    border: 3px solid transparent;
    border-left-color: #444;
    border-right: 0;
}
.view-tabs {
    display: flex;
    gap: 1px;
    height: 25px;
    font-size: 13px;
    font-feature-settings: normal;
    color: #fff;
    border-top: 2px solid #8a8a8a;
    white-space: nowrap;
}
.view-tabs a {
    display: flex;
    align-items: center;
    gap: 2px;
    height: 20px;
    padding: 0 6px;
}
.view-tabs .active {
    padding: 0 6px 0 3px;
    margin-left: 3px;
    color: #000;
    background: #e4e6ea;
    border-radius: 0 0 3px 3px;
}
.taskbar {
    display: flex;
    gap: 3px;
    height: 4px;
    padding: 1px 0 0 99px;
    background: #606060;
}
.taskbar span {
    width: 59px;
    background: #8a8a8a;
    border: 1px solid #b0b0b0;
}
.taskbar .first {
    margin-right: 124px;
}
.taskbar .current {
    background: #aaa;
    border-color: #fff;
}
```
